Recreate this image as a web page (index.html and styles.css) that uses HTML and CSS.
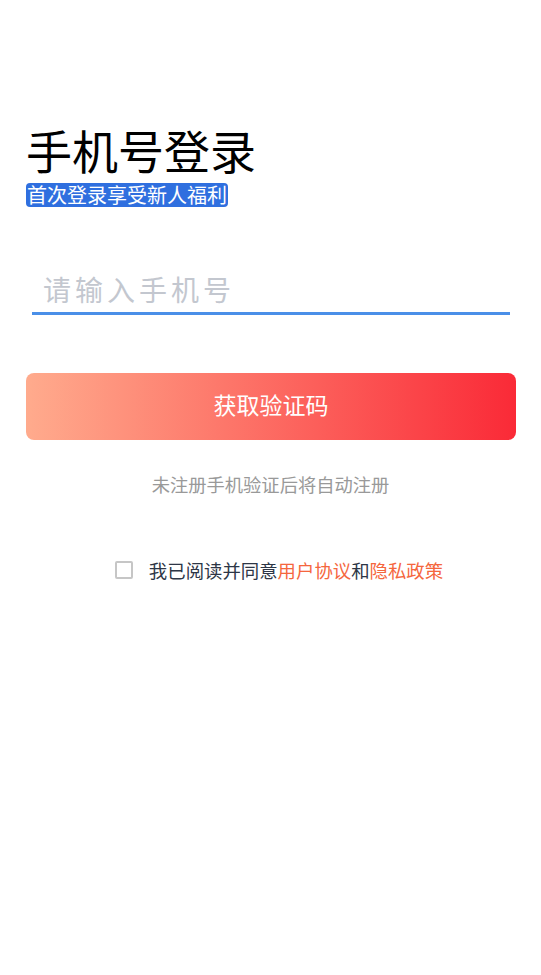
FILE: index.html
```html
<!DOCTYPE html>
<html>
<head>
  <meta charset="utf-8">
  <title>手机号登录</title>
  <link rel="stylesheet" href="styles.css">
</head>
<body>
  <div class="page">
    <h1 class="title">手机号登录</h1>
    <div class="sub"><span class="sub-tag">首次登录享受新人福利</span></div>
    <form class="login">
      <input type="text" class="phone" placeholder="请输入手机号">
      <button type="button" class="btn">获取验证码</button>
    </form>
    <p class="note">未注册手机验证后将自动注册</p>
    <div class="agree">
      <span class="box"></span>
      <span class="agree-text">我已阅读并同意<a class="link">用户协议</a>和<a class="link">隐私政策</a></span>
    </div>
  </div>
</body>
</html>
```

FILE: styles.css
```css
body {margin: 0;
      background-color: #ffffff;
      font-family: "Noto Sans CJK SC", "Noto Sans", sans-serif;}

.page {padding: 0 26px;}

.title {margin: 126px 0 0 0;
        font-size: 46px;
        line-height: 46px;
        font-weight: 400;
        color: #000000;}

.sub {margin-top: 11px;
      height: 24px;}

.sub-tag {display: inline-block;
          padding: 0 1px;
          font-size: 20px;
          line-height: 24px;
          color: #ffffff;
          background-color: #2f6fdf;
          border-radius: 4px;}

.login {margin: 65px 0 0 0;}

.phone {display: block;
        box-sizing: border-box;
        width: 478px;
        height: 43px;
        margin: 0 6px;
        padding: 0 0 6px 11px;
        border: none;
        border-bottom: solid #4a8fe8 3px;
        outline: none;
        font-family: inherit;
        font-size: 28px;
        letter-spacing: 4px;
        color: #333333;}

.phone::placeholder {color: #c3c7cf;}

.btn {display: block;
      width: 490px;
      height: 67px;
      margin-top: 58px;
      padding: 0 0 5px 0;
      border: none;
      border-radius: 8px;
      background: linear-gradient(to right, #ffab8d, #fa2a37);
      color: #ffffff;
      font-family: inherit;
      font-size: 23px;}

.note {margin: 32px 0 0 0;
       text-align: center;
       font-size: 18.3px;
       line-height: 24px;
       color: #999999;}

.agree {display: flex;
        align-items: center;
        justify-content: center;
        margin-top: 62px;
        padding-left: 17px;
        gap: 16px;}

.box {width: 14px;
      height: 14px;
      border: solid #c6c6c6 2px;
      border-radius: 2px;}

.agree-text {font-size: 18.4px;
             line-height: 24px;
             color: #2d3646;}

.link {color: #f5663d;}
```
